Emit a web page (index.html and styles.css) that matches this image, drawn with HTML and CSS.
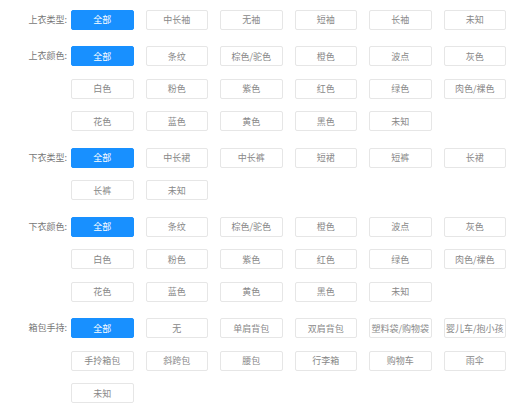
FILE: index.html
```html
<!DOCTYPE html>
<html lang="zh">
<head>
<meta charset="utf-8">
<link rel="stylesheet" href="styles.css">
</head>
<body>
<div class="filters">
  <div class="group">
    <div class="label">上衣类型:</div>
    <div class="options">
      <span class="opt active">全部</span><span class="opt">中长袖</span><span class="opt">无袖</span><span class="opt">短袖</span><span class="opt">长袖</span><span class="opt">未知</span>
    </div>
  </div>
  <div class="group">
    <div class="label">上衣颜色:</div>
    <div class="options">
      <span class="opt active">全部</span><span class="opt">条纹</span><span class="opt">棕色/驼色</span><span class="opt">橙色</span><span class="opt">波点</span><span class="opt">灰色</span>
      <span class="opt">白色</span><span class="opt">粉色</span><span class="opt">紫色</span><span class="opt">红色</span><span class="opt">绿色</span><span class="opt">肉色/裸色</span>
      <span class="opt">花色</span><span class="opt">蓝色</span><span class="opt">黄色</span><span class="opt">黑色</span><span class="opt">未知</span>
    </div>
  </div>
  <div class="group">
    <div class="label">下衣类型:</div>
    <div class="options">
      <span class="opt active">全部</span><span class="opt">中长裙</span><span class="opt">中长裤</span><span class="opt">短裙</span><span class="opt">短裤</span><span class="opt">长裙</span>
      <span class="opt">长裤</span><span class="opt">未知</span>
    </div>
  </div>
  <div class="group">
    <div class="label">下衣颜色:</div>
    <div class="options">
      <span class="opt active">全部</span><span class="opt">条纹</span><span class="opt">棕色/驼色</span><span class="opt">橙色</span><span class="opt">波点</span><span class="opt">灰色</span>
      <span class="opt">白色</span><span class="opt">粉色</span><span class="opt">紫色</span><span class="opt">红色</span><span class="opt">绿色</span><span class="opt">肉色/裸色</span>
      <span class="opt">花色</span><span class="opt">蓝色</span><span class="opt">黄色</span><span class="opt">黑色</span><span class="opt">未知</span>
    </div>
  </div>
  <div class="group">
    <div class="label">箱包手持:</div>
    <div class="options">
      <span class="opt active">全部</span><span class="opt">无</span><span class="opt">单肩背包</span><span class="opt">双肩背包</span><span class="opt">塑料袋/购物袋</span><span class="opt">婴儿车/抱小孩</span>
      <span class="opt">手拎箱包</span><span class="opt">斜跨包</span><span class="opt">腰包</span><span class="opt">行李箱</span><span class="opt">购物车</span><span class="opt">雨伞</span>
      <span class="opt">未知</span>
    </div>
  </div>
</div>
</body>
</html>
```

FILE: styles.css
```css
html, body {
  margin: 0;
  padding: 0;
  background: #ffffff;
}

body {
  font-family: "Noto Sans CJK SC", "Noto Sans", sans-serif;
  font-size: 9px;
  color: #777777;
}

.filters {
  display: flex;
  flex-direction: column;
  gap: 16.5px;
  padding: 9.5px 0 0 0;
}

.group {
  display: flex;
  align-items: flex-start;
}

.label {
  width: 68px;
  flex: none;
  height: 20px;
  line-height: 20px;
  text-align: right;
  color: #777777;
  padding-right: 1px;
  box-sizing: border-box;
}

.options {
  display: grid;
  grid-template-columns: repeat(6, 62.5px);
  column-gap: 12px;
  row-gap: 12.5px;
  margin-left: 3px;
}

.opt {
  display: flex;
  align-items: center;
  justify-content: center;
  height: 20px;
  box-sizing: border-box;
  border: 1px solid #e6e6e6;
  border-radius: 2px;
  color: #888888;
  white-space: nowrap;
  overflow: hidden;
}

.opt.active {
  background: #1890ff;
  border-color: #1890ff;
  color: #ffffff;
}
```
